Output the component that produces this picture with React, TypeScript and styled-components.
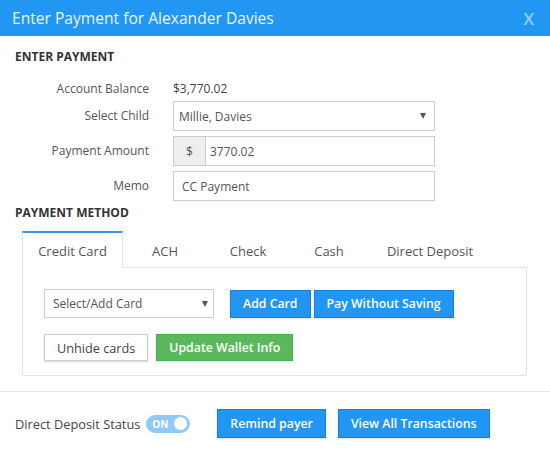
import styled, { createGlobalStyle } from "styled-components";

const GlobalStyle = createGlobalStyle`
  html, body {
    margin: 0;
    padding: 0;
    background: #fff;
  }
  body {
    font-family: "Open Sans", "Liberation Sans", sans-serif;
    font-size: 13px;
    color: #333;
  }
`;

const Modal = styled.div`
  width: 550px;
  height: 449px;
  display: flex;
  flex-direction: column;
  overflow: hidden;
`;

const Header = styled.div`
  height: 36px;
  flex-shrink: 0;
  background: #2196f3;
  display: flex;
  align-items: center;
  justify-content: space-between;
  padding: 0 16px 0 12px;
  color: #eaf4fd;
`;

const Title = styled.div`
  font-size: 15.6px;
`;

const Close = styled.div`
  font-size: 17px;
  font-weight: 600;
  color: #9ccdf8;
`;

const Body = styled.div`
  padding: 13px 15px 0;
`;

const SectionTitle = styled.div`
  font-size: 12px;
  line-height: 16px;
  font-weight: 700;
  color: #333;
`;

const Form = styled.div`
  display: grid;
  grid-template-columns: 134px 262px;
  column-gap: 24px;
  row-gap: 5px;
  margin-top: 17px;
  align-items: center;
`;

const Label = styled.div`
  text-align: right;
  color: #555;
  font-size: 12px;
  line-height: 14px;
`;

const Value = styled.div`
  font-size: 12px;
  line-height: 14px;
  color: #444;
  height: 14px;
`;

const Field = styled.div`
  height: 30px;
  box-sizing: border-box;
  border: 1px solid #ccc;
  display: flex;
  align-items: center;
  font-size: 12px;
  color: #555;
  background: #fff;
`;

const FieldText = styled.div<{ $pad?: number }>`
  flex: 1;
  padding: 0 ${(p) => p.$pad ?? 8}px;
`;

const Caret = styled.div<{ $right?: number }>`
  width: 0;
  height: 0;
  border-left: 3.5px solid transparent;
  border-right: 3.5px solid transparent;
  border-top: 6px solid #555;
  margin-right: ${(p) => p.$right ?? 8}px;
`;

const Addon = styled.div`
  width: 31px;
  align-self: stretch;
  background: #eee;
  border-right: 1px solid #ccc;
  display: flex;
  align-items: center;
  justify-content: center;
  color: #555;
`;

const MethodTitle = styled(SectionTitle)`
  margin-top: 4px;
`;

const Tabs = styled.div`
  margin: 10px 8px 0 7px;
`;

const TabBar = styled.div`
  display: flex;
  height: 37px;
`;

const Tab = styled.div<{ $active?: boolean; $w: number }>`
  width: ${(p) => p.$w}px;
  box-sizing: border-box;
  display: flex;
  align-items: center;
  justify-content: center;
  font-size: 13px;
  color: #555;
  padding-top: 2px;
  border-top: 2px solid ${(p) => (p.$active ? "#3a91e8" : "transparent")};
  border-left: 1px solid ${(p) => (p.$active ? "#e3e3e3" : "transparent")};
  border-right: 1px solid ${(p) => (p.$active ? "#e3e3e3" : "transparent")};
  border-bottom: 1px solid ${(p) => (p.$active ? "#fff" : "#e3e3e3")};
  background: #fff;
`;

const TabFill = styled.div`
  flex: 1;
  border-bottom: 1px solid #e3e3e3;
`;

const Panel = styled.div`
  height: 108px;
  box-sizing: border-box;
  border: 1px solid #e3e3e3;
  border-top: none;
  border-radius: 0 0 3px 3px;
  padding: 21px 21px 0;
  display: flex;
  flex-direction: column;
  gap: 16px;
`;

const Row = styled.div`
  display: flex;
  align-items: center;
`;

const SelectBox = styled(Field)`
  width: 170px;
  height: 29px;
  margin-right: 16px;
`;

const Button = styled.div<{ $kind?: "primary" | "success" | "default"; $gap?: number; $h?: number }>`
  height: ${(p) => p.$h ?? 28}px;
  box-sizing: border-box;
  padding: 0 12px;
  display: flex;
  align-items: center;
  font-size: ${(p) => (p.$kind === "default" ? 12.7 : 12.3)}px;
  margin-right: ${(p) => p.$gap ?? 3}px;
  border: 1px solid
    ${(p) =>
      p.$kind === "success" ? "#4cae4c" : p.$kind === "default" ? "#ccc" : "#1a7fd4"};
  background: ${(p) =>
    p.$kind === "success" ? "#5cb85c" : p.$kind === "default" ? "#fff" : "#2196f3"};
  color: ${(p) => (p.$kind === "default" ? "#444" : "#fff")};
  font-weight: ${(p) => (p.$kind === "default" ? 400 : 600)};
  box-shadow: 0 1px 2px rgba(0, 0, 0, 0.15);
`;

const Divider = styled.div`
  height: 1px;
  flex-shrink: 0;
  background: #e5e5e5;
  margin-top: 15px;
`;

const Footer = styled.div`
  display: flex;
  align-items: center;
  padding: 17px 15px 0;
`;

const FooterLabel = styled.div`
  font-size: 12.8px;
  color: #444;
  margin-right: 6px;
`;

const Toggle = styled.div`
  width: 44px;
  height: 18px;
  border-radius: 9px;
  background: #90caf9;
  display: flex;
  align-items: center;
  justify-content: space-between;
  padding: 0 3px 0 6px;
  box-sizing: border-box;
  margin-right: 27px;
`;

const ToggleText = styled.span`
  color: #fff;
  font-size: 10px;
  font-weight: 700;
`;

const Knob = styled.span`
  width: 13px;
  height: 13px;
  border-radius: 50%;
  background: #fff;
`;

export default function App() {
  return (
    <Modal>
      <GlobalStyle />
      <Header>
        <Title>Enter Payment for Alexander Davies</Title>
        <Close>X</Close>
      </Header>
      <Body>
        <SectionTitle>ENTER PAYMENT</SectionTitle>
        <Form>
          <Label>Account Balance</Label>
          <Value>$3,770.02</Value>
          <Label>Select Child</Label>
          <Field>
            <FieldText $pad={5}>Millie, Davies</FieldText>
            <Caret />
          </Field>
          <Label>Payment Amount</Label>
          <Field>
            <Addon>$</Addon>
            <FieldText $pad={4}>3770.02</FieldText>
          </Field>
          <Label>Memo</Label>
          <Field>
            <FieldText $pad={8}>CC Payment</FieldText>
          </Field>
        </Form>
        <MethodTitle>PAYMENT METHOD</MethodTitle>
        <Tabs>
          <TabBar>
            <Tab $active $w={101}>Credit Card</Tab>
            <Tab $w={84}>ACH</Tab>
            <Tab $w={82}>Check</Tab>
            <Tab $w={80}>Cash</Tab>
            <Tab $w={122}>Direct Deposit</Tab>
            <TabFill />
          </TabBar>
          <Panel>
            <Row>
              <SelectBox>
                <FieldText>Select/Add Card</FieldText>
                <Caret $right={5} />
              </SelectBox>
              <Button $kind="primary">Add Card</Button>
              <Button $kind="primary">Pay Without Saving</Button>
            </Row>
            <Row>
              <Button $kind="default" $gap={8} $h={27}>Unhide cards</Button>
              <Button $kind="success" $h={27}>Update Wallet Info</Button>
            </Row>
          </Panel>
        </Tabs>
      </Body>
      <Divider />
      <Footer>
        <FooterLabel>Direct Deposit Status</FooterLabel>
        <Toggle>
          <ToggleText>ON</ToggleText>
          <Knob />
        </Toggle>
        <Button $kind="primary" $gap={12} $h={29}>Remind payer</Button>
        <Button $kind="primary" $h={29}>View All Transactions</Button>
      </Footer>
    </Modal>
  );
}
